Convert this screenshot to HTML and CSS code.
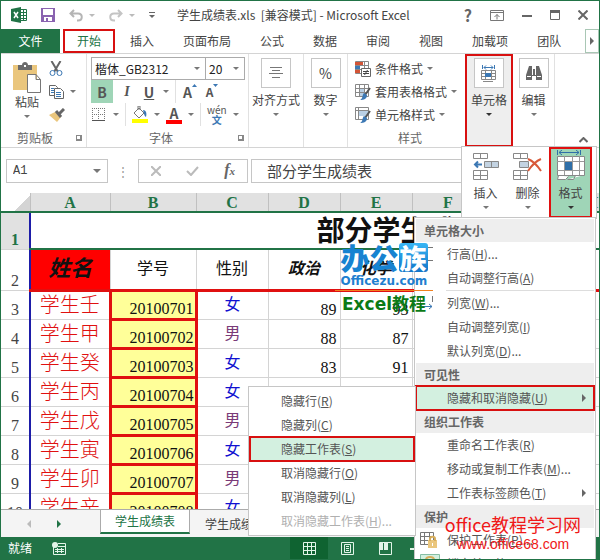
FILE: index.html
```html
<!DOCTYPE html>
<html lang="zh-CN">
<head>
  <meta charset="UTF-8">
  <meta name="viewport" content="width=device-width, initial-scale=1.0">
  <title>学生成绩表.xls</title>
  <link rel="stylesheet" href="styles.css">
</head>
<body>

<div class="window">
  <header class="titlebar">
    <div class="quick">
      <svg width="16" height="16" viewBox="0 0 16 16"><path fill="#fff" stroke="#217346" d="M8 2.500h7.500v11H8"/><path stroke="#217346" d="M8 5.500h7M8 8.500h7M8 11.500h7M12.500 3v10"/><path fill="#217346" d="M0 2l10-2v16L0 14z"/><path stroke="#fff" stroke-width="1.500" d="M3 5l4 6M7 5l-4 6"/></svg>
      <svg width="14" height="14" viewBox="0 0 14 14"><path fill="#8a63b0" d="M0 0h14v14H0z"/><path fill="#fff" d="M2 1h10v6H2zM3 9h8v4H7v-3H5v3H3z"/></svg>
      <span class="undo">
        <svg width="14" height="13" viewBox="0 0 14 13"><path fill="none" stroke="#b5b5b5" stroke-width="2" d="M5 1L1.500 4.500 5 8M2 4.500h7c5 0 5 7 0 7H8"/></svg>
        <i class="caret light"></i>
      </span>
      <span class="undo">
        <svg width="14" height="13" viewBox="0 0 14 13"><path fill="none" stroke="#c4c4c4" stroke-width="2" d="M9 1l3.500 3.500L9 8M12 4.500H5c-5 0-5 7 0 7h1"/></svg>
        <i class="caret light"></i>
      </span>
      <svg width="6" height="6" viewBox="0 0 6 6"><path stroke="#666" d="M0 .500h6"/><path fill="#666" d="M0 3h6L3 6z"/></svg>
    </div>
    <h1>学生成绩表.xls&nbsp; [兼容模式] - Microsoft Excel</h1>
    <div class="winbtns">
      <button aria-label="帮助">?</button>
      <button aria-label="功能区显示选项"><svg width="14" height="11" viewBox="0 0 14 11"><path fill="none" stroke="#777" d="M.500.500h13v10H.500zM0 2.500h14M7 9.500v-5M4.500 7L7 4.500 9.500 7"/></svg></button>
      <button aria-label="最小化"><svg width="10" height="10" viewBox="0 0 10 10"><path fill="#666" d="M0 5h10v2H0z"/></svg></button>
      <button aria-label="最大化"><svg width="10" height="10" viewBox="0 0 10 10"><path fill="none" stroke="#666" d="M.500.500h9v9h-9z"/><path fill="#666" d="M0 0h10v3H0z"/></svg></button>
      <button aria-label="关闭"><svg width="10" height="10" viewBox="0 0 10 10"><path stroke="#666" stroke-width="2" d="M.500.500l9 9M9.500.500l-9 9"/></svg></button>
    </div>
  </header>

  <nav class="tabs">
    <button class="file">文件</button>
    <button class="active">开始</button>
    <button>插入</button>
    <button>页面布局</button>
    <button>公式</button>
    <button>数据</button>
    <button>审阅</button>
    <button>视图</button>
    <button>加载项</button>
    <button>团队</button>
    <button class="more" aria-label="更多"><i class="arrow-r"></i></button>
  </nav>

  <section class="ribbon">
    <div class="group clipboard">
      <div class="group-body">
        <button class="big">
          <svg width="28" height="32" viewBox="0 0 28 32"><path fill="#eac67d" d="M0 3h24v25H0z"/><path fill="#6b6b6b" d="M5 3h4c0-4 6-4 6 0h4v5H5z"/><path fill="#fff" d="M11 3h2v2h-2z"/><path fill="#fff" stroke="#777" d="M14.500 12.500H23l4.500 5v13h-13zM23 12.500v5h4.500"/></svg>
          <span>粘贴</span>
          <i class="caret"></i>
        </button>
        <div class="smalls">
          <button aria-label="剪切"><svg width="14" height="16" viewBox="0 0 14 16"><path stroke="#666" stroke-width="2" d="M2.500 0L9 11M11.500 0L5 11"/><circle cx="3.500" cy="12" r="2.500" fill="#fff" stroke="#3c78b4"/><circle cx="10.500" cy="12" r="2.500" fill="#fff" stroke="#3c78b4"/></svg></button>
          <button aria-label="复制"><svg width="15" height="14" viewBox="0 0 15 14"><path fill="#fff" stroke="#666" d="M.500.500h6l2 2v8h-8z"/><path stroke="#3c78b4" d="M2 3.500h3M2 5.500h3M2 7.500h3"/><path fill="#fff" stroke="#666" d="M5.500 3.500h6l3 3v7h-9z"/><path stroke="#3c78b4" d="M7 7.500h5M7 9.500h5M7 11.500h5"/></svg><i class="caret"></i></button>
          <button aria-label="格式刷"><svg width="16" height="14" viewBox="0 0 16 14"><path fill="#eac67d" d="M0 7l6-3 6 5-4 5z"/><path stroke="#666" stroke-width="3" d="M7 3l5 6M10 6l5-5"/></svg></button>
        </div>
      </div>
      <div class="group-label">剪贴板<i class="launcher"></i></div>
    </div>

    <div class="group font">
      <div class="combos">
        <label class="combo name"><select aria-label="字体"><option>楷体_GB2312</option></select><i class="caret"></i></label>
        <label class="combo size"><select aria-label="字号"><option>20</option></select><i class="caret"></i></label>
      </div>
      <div class="tools">
        <button class="on"><b>B</b></button>
        <button class="ital">I</button>
        <button class="under">U</button>
        <i class="caret"></i>
        <span class="vline"></span>
        <button class="grow">A<svg width="5" height="3" viewBox="0 0 5 3"><path fill="#3c78b4" d="M0 3h5L2.500 0z"/></svg></button>
        <button class="shrink">A<svg width="5" height="3" viewBox="0 0 5 3"><path fill="#3c78b4" d="M0 0h5L2.500 3z"/></svg></button>
      </div>
      <div class="tools">
        <button aria-label="边框"><svg width="14" height="14" viewBox="0 0 14 14"><path fill="none" stroke="#777" stroke-dasharray="1 1" d="M.500 0v13M6.500 0v13M12.500 0v13M0 .500h13M0 6.500h13"/><path stroke="#555" d="M0 12.500h13"/></svg></button>
        <i class="caret"></i>
        <span class="vline"></span>
        <button aria-label="填充颜色"><svg width="16" height="17" viewBox="0 0 16 17"><path fill="#fff" stroke="#777" d="M2 7l5-5 5 5-5 5zM6 4V0h2v4"/><path fill="#3c78b4" d="M11 4c3 0 4 3 3 7-2-1-2-4-3-7z"/><path fill="#ff0" d="M0 13h16v4H0z"/></svg></button>
        <i class="caret"></i>
        <button class="color">A</button>
        <i class="caret"></i>
        <span class="vline"></span>
        <button class="pinyin"><span>wén</span><b>文</b></button>
        <i class="caret"></i>
      </div>
      <div class="group-label">字体<i class="launcher"></i></div>
    </div>

    <div class="group drop align">
      <button class="big"><span class="tile"><svg width="14" height="12" viewBox="0 0 14 12"><path stroke="#777" d="M1 .500h12M3 3.500h8M0 6.500h14M3 10.500h8"/></svg></span><span>对齐方式</span><i class="caret"></i></button>
    </div>

    <div class="group drop number">
      <button class="big"><span class="tile">%</span><span>数字</span><i class="caret"></i></button>
    </div>

    <div class="group styles">
      <button><svg width="16" height="16" viewBox="0 0 16 16"><path fill="#fff" stroke="#888" d="M.500.500h13v12H.500zM0 4.500h13M0 8.500h13M9.500 0v12"/><path fill="#d35436" d="M0 1h8v3H0zM0 9h5v3H0z"/><path fill="#3c78b4" d="M0 5h5v3H0z"/><path fill="#fff" stroke="#666" d="M6.500 7.500h9v8h-9z"/><path stroke="#444" d="M8 10.500h6M8 12.500h6M12.500 9l-3 5"/></svg>条件格式<i class="caret"></i></button>
      <button><svg width="16" height="16" viewBox="0 0 16 16"><path fill="#fff" stroke="#888" d="M.500.500h13v12H.500zM0 4.500h13M0 8.500h13M4.500 0v12M9.500 0v12"/><path fill="#b9cfe4" d="M5 5h4v3H5zM5 9h4v3H5z"/><path stroke="#555" stroke-width="2" d="M15 4l-5 7"/><path fill="#3c78b4" d="M9 9l3 2c0 4-3 5-7 5 3-1 2-5 4-7z"/></svg>套用表格格式<i class="caret"></i></button>
      <button><svg width="16" height="16" viewBox="0 0 16 16"><path fill="#fff" stroke="#888" d="M.500.500h13v12H.500zM0 3.500h13M3.500 0v12"/><path fill="#b9cfe4" d="M4 4h9v5H4z"/><path stroke="#555" stroke-width="2" d="M15 4l-5 7"/><path fill="#3c78b4" d="M9 9l3 2c0 4-3 5-7 5 3-1 2-5 4-7z"/></svg>单元格样式<i class="caret"></i></button>
      <div class="group-label">样式</div>
    </div>

    <div class="group drop cells">
      <button class="big"><span class="tile"><svg width="16" height="17" viewBox="0 0 16 17"><path fill="none" stroke="#3c78b4" d="M1.500 0v4M13.500 0v4M3 2.500h9M5 .500L3 2.500l2 2M10 .500l2 2-2 2"/><path fill="#fff" stroke="#888" d="M.500 5.500h14v9H.500zM0 8.500h14M0 11.500h14M4.500 5v9M10.500 5v9M2 16.500h10"/><path fill="#3c78b4" d="M4 8h6v4H4z"/></svg></span><span>单元格</span><i class="caret dark"></i></button>
    </div>

    <div class="group drop edit">
      <button class="big"><span class="tile"><svg width="16" height="14" viewBox="0 0 16 14"><path fill="#666" d="M3 0h3v3h4V0h3l3 9v5h-6v-4H6v4H0V9z"/><path stroke="#fff" d="M6.500 3v6M9.500 3v6M1 10.500h4M11 10.500h4"/></svg></span><span>编辑</span><i class="caret"></i></button>
    </div>
    <button class="collapse" aria-label="折叠功能区"><svg width="9" height="6" viewBox="0 0 9 6"><path fill="none" stroke="#666" stroke-width="2" d="M.500 5l4-4 4 4"/></svg></button>
  </section>

  <section class="formula">
    <label class="namebox"><input type="text" value="A1" aria-label="名称框"><i class="caret"></i></label>
    <span class="dots">⋮</span>
    <div class="fx">
      <button aria-label="取消"><svg width="10" height="10" viewBox="0 0 10 10"><path stroke="#bbb" stroke-width="2" d="M0 0l10 10M10 0L0 10"/></svg></button>
      <button aria-label="输入"><svg width="13" height="10" viewBox="0 0 13 10"><path fill="none" stroke="#bbb" stroke-width="2" d="M1 5l4 4 7-8"/></svg></button>
      <button class="fn">f<small>x</small></button>
    </div>
    <input class="content" type="text" value="部分学生成绩表" aria-label="编辑栏">
  </section>

  <main class="grid">
    <table>
      <colgroup><col class="c-row"><col class="c-a"><col class="c-b"><col class="c"><col class="c"><col class="c"><col class="c"><col class="c"><col class="c"><col class="c"><col class="c-last"></colgroup>
      <thead>
        <tr><th class="corner"></th><th>A</th><th>B</th><th>C</th><th>D</th><th>E</th><th>F</th><th>G</th><th>H</th><th>I</th><th>J</th></tr>
      </thead>
      <tbody>
        <tr class="r1"><th>1</th><td colspan="10">部分学生成绩表</td></tr>
        <tr class="r2"><th>2</th><td class="xm">姓名</td><td>学号</td><td>性别</td><td class="it">政治</td><td class="it">化学</td><td></td><td></td><td></td><td></td><td></td></tr>
        <tr><th>3</th><td class="stu">学生壬</td><td class="id">20100701</td><td class="f">女</td><td>89</td><td>93</td><td></td><td></td><td></td><td></td><td></td></tr>
        <tr><th>4</th><td class="stu">学生甲</td><td class="id">20100702</td><td class="m">男</td><td>88</td><td>87</td><td></td><td></td><td></td><td></td><td></td></tr>
        <tr><th>5</th><td class="stu">学生癸</td><td class="id">20100703</td><td class="f">女</td><td>83</td><td>91</td><td></td><td></td><td></td><td></td><td></td></tr>
        <tr><th>6</th><td class="stu">学生丙</td><td class="id">20100704</td><td class="f">女</td><td></td><td></td><td></td><td></td><td></td><td></td><td></td></tr>
        <tr><th>7</th><td class="stu">学生戊</td><td class="id">20100705</td><td class="m">男</td><td></td><td></td><td></td><td></td><td></td><td></td><td></td></tr>
        <tr><th>8</th><td class="stu">学生寅</td><td class="id">20100706</td><td class="f">女</td><td></td><td></td><td></td><td></td><td></td><td></td><td></td></tr>
        <tr><th>9</th><td class="stu">学生卯</td><td class="id">20100707</td><td class="m">男</td><td></td><td></td><td></td><td></td><td></td><td></td><td></td></tr>
        <tr><th>10</th><td class="stu">学生辛</td><td class="id">20100708</td><td class="f">女</td><td></td><td></td><td></td><td></td><td></td><td></td><td></td></tr>
      </tbody>
    </table>
  </main>

  <nav class="sheets">
    <button class="nav" aria-label="上一个"><i class="arrow-l"></i></button>
    <button class="nav" aria-label="下一个"><i class="arrow-r"></i></button>
    <button class="sheet active">学生成绩表</button>
    <button class="sheet">学生成绩表</button>
  </nav>

  <footer class="status">
    <span>就绪</span>
    <svg width="14" height="13" viewBox="0 0 14 13"><path fill="none" stroke="#e2f5e8" d="M1.500 4v8.500h12v-11H6M6 4.500h7M3 7.500h9M3 9.500h9M5.500 6v5M9.500 6v5"/><circle cx="3" cy="3" r="3" fill="#e2f5e8"/></svg>
    <div class="views">
      <button class="on" aria-label="普通"><svg width="13" height="13" viewBox="0 0 13 13"><path fill="none" stroke="#e2f5e8" d="M.500.500h12v12H.500zM0 4.500h13M0 8.500h13M4.500 0v13M8.500 0v13"/></svg></button>
      <button aria-label="页面布局"><svg width="13" height="13" viewBox="0 0 13 13"><path fill="none" stroke="#e2f5e8" d="M.500.500h12v12H.500zM3.500 2.500h6v8h-6zM5 4.500h3M5 6.500h3M5 8.500h3"/></svg></button>
      <button aria-label="分页预览"><svg width="13" height="13" viewBox="0 0 13 13"><path fill="none" stroke="#e2f5e8" d="M.500.500h12v12H.500z"/><path fill="#e2f5e8" d="M1 1h3v7H1zM5 1h4v7H5z"/></svg></button>
      <button class="minus" aria-label="缩小"><svg width="9" height="13" viewBox="0 0 9 13"><path fill="#e2f5e8" d="M0 6h9v2H0z"/></svg></button>
    </div>
  </footer>

  <div class="cells-popup">
    <button>
      <svg width="26" height="28" viewBox="0 0 26 28"><path fill="#fff" stroke="#888" d="M.500.500h14v5H.500zM7.500 0v6M.500 17.500h14v9H.500zM0 22.500h14M7.500 17v9"/><path fill="#c3d3e2" stroke="#888" d="M11.500 8.500h14v6h-14zM18.500 8v6"/><path fill="none" stroke="#3c78b4" stroke-width="2" d="M9 11.500H2M5 8.500l-3 3 3 3"/></svg>
      <span>插入</span><i class="caret"></i>
    </button>
    <button>
      <svg width="29" height="28" viewBox="0 0 29 28"><path fill="#fff" stroke="#888" d="M.500.500h14v5H.500zM7.500 0v6M.500 17.500h14v9H.500zM0 22.500h14M7.500 17v9"/><path fill="#c3d3e2" stroke="#888" d="M6.500 8.500h9v6h-9z"/><path fill="none" stroke="#d85a3a" stroke-width="2" d="M15 6c5 2 9 6 13 12M28 6c-5 2-9 6-13 12"/></svg>
      <span>删除</span><i class="caret"></i>
    </button>
    <button class="hot">
      <svg width="28" height="31" viewBox="0 0 28 31"><path fill="none" stroke="#2f6fa8" d="M.500 0v5M23.500 0v5M2 2.500h20M5 0L2 2.500 5 5M19 0l3 2.500L19 5"/><path fill="#fff" stroke="#888" d="M1.500 25.500l-1 4h8l3-3M10.500 29.500h6l2-4h7"/><path fill="#fff" stroke="#888" d="M.500 6.500h27v19H.500z"/><path fill="none" stroke="#999" d="M0 11.500h27M0 20.500h27M7.500 6v19M15.500 6v19M22.500 6v19"/><path fill="#2f6fa8" d="M8 12h7v8H8z"/></svg>
      <span>格式</span><i class="caret dark"></i>
    </button>
  </div>

  <div class="menu">
    <h2>单元格大小</h2>
    <button><svg width="13" height="14" viewBox="0 0 13 14"><path fill="none" stroke="#777" d="M5 .500h8M5 13.500h8M5.500 0v14"/></svg><span>行高(<u>H</u>)...</span></button>
    <button><span>自动调整行高(<u>A</u>)</span></button>
    <hr>
    <button><svg width="13" height="14" viewBox="0 0 13 14"><path fill="none" stroke="#777" d="M.500 0v12M12.500 0v6"/><path fill="none" stroke="#3c78b4" d="M2 10.500h10M9 8l3 2.500L9 13"/></svg><span>列宽(<u>W</u>)...</span></button>
    <button><span>自动调整列宽(<u>I</u>)</span></button>
    <button><span>默认列宽(<u>D</u>)...</span></button>
    <h2>可见性</h2>
    <div class="has-sub">
      <button class="hot"><span>隐藏和取消隐藏(<u>U</u>)</span><i class="arrow-r"></i></button>
      <div class="submenu">
        <button>隐藏行(<u>R</u>)</button>
        <button>隐藏列(<u>C</u>)</button>
        <button class="hot">隐藏工作表(<u>S</u>)</button>
        <button>取消隐藏行(<u>O</u>)</button>
        <button>取消隐藏列(<u>L</u>)</button>
        <button disabled>取消隐藏工作表(<u>H</u>)...</button>
      </div>
    </div>
    <h2>组织工作表</h2>
    <button><span>重命名工作表(<u>R</u>)</span></button>
    <button><span>移动或复制工作表(<u>M</u>)...</span></button>
    <button><span>工作表标签颜色(<u>T</u>)</span><i class="arrow-r"></i></button>
    <h2>保护</h2>
    <button><svg width="17" height="16" viewBox="0 0 17 16"><path fill="#fff" stroke="#777" d="M.500.500h13v12H.500zM0 4.500h13M0 8.500h13M4.500 0v12M9.500 0v12"/><path fill="#eac67d" d="M8 8h9v8H8z"/><path fill="none" stroke="#d6ad5b" stroke-width="2" d="M10 9V7c0-3 5-3 5 0v2"/><path fill="#fff" d="M12 11h1v3h-1z"/></svg><span>保护工作表(<u>P</u>)...</span></button>
    <button><svg width="20" height="20" viewBox="0 0 20 20"><path fill="#d3f0e0" stroke="#86bfa4" d="M.500.500h19v19H.500z"/><path fill="none" stroke="#d6ad5b" stroke-width="2" d="M6 10V6c0-4 8-4 8 0v4"/><path fill="#eac67d" d="M4 9h12v9H4z"/></svg><span>锁定单元格(<u>L</u>)</span></button>
  </div>

  <div class="logo">
    <div class="logo-name">办公<span>族</span></div>
    <div class="logo-url">Officezu.com</div>
    <div class="logo-sub">Excel教程</div>
  </div>
  <div class="site">
    <div>office教程学习网</div>
    <a href="#">www.office68.com</a>
  </div>
</div>

</body>
</html>
```

FILE: styles.css
```css
* {
  box-sizing: border-box;
}
body {
  margin: 0;
  font-family: "Noto Sans CJK SC", sans-serif;
  font-size: 12px;
  line-height: 16px;
  color: #444;
  overflow: hidden;
}
button {
  border: 0;
  padding: 0;
  margin: 0;
  background: none;
  font: inherit;
  color: inherit;
}
input, select {
  border: 0;
  padding: 0;
  margin: 0;
  outline: 0;
  background: none;
  font: inherit;
  color: inherit;
  min-width: 0;
}
svg {
  display: block;
  flex: none;
}
.window {
  position: relative;
  display: flex;
  flex-direction: column;
  height: 100vh;
  overflow: hidden;
  background: #fff;
  border: 1px solid #217346;
}

/* small arrows */
.caret {
  flex: none;
  border: 3px solid transparent;
  border-top-color: #777;
  border-bottom: 0;
}
.caret.light {
  border-top-color: #bbb;
}
.caret.dark {
  border-top-color: #333;
}
.arrow-r, .arrow-l {
  flex: none;
  border: 4px solid transparent;
  border-left-color: #666;
  border-right: 0;
}
.arrow-l {
  border-left: 0;
  border-right: 4px solid #bbb;
}

/* title bar */
.titlebar {
  display: flex;
  align-items: center;
  height: 28px;
  padding: 0 11px 0 10px;
}
.quick {
  display: flex;
  align-items: center;
  gap: 14px;
  width: 166px;
}
.undo {
  display: flex;
  align-items: center;
  gap: 6px;
}
h1 {
  flex: 1;
  margin: 0;
  font-size: 12px;
  font-weight: normal;
  white-space: nowrap;
}
.winbtns {
  display: flex;
  align-items: center;
  gap: 18px;
  color: #666;
}
.winbtns button:first-child {
  font-size: 16px;
  font-weight: bold;
}

/* tabs */
.tabs {
  display: flex;
  gap: 1px;
  height: 25px;
  border-bottom: 1px solid #d4d4d4;
}
.tabs button {
  padding: 0 14px;
  white-space: nowrap;
}
.tabs .file {
  width: 59px;
  margin-right: 2px;
  background: #217346;
  color: #fff;
}
.tabs .active {
  color: #217346;
  outline: 2px solid #d81010;
  outline-offset: -2px;
}
.tabs .more {
  display: flex;
  align-items: center;
  margin-left: auto;
  padding: 0 4px;
  border: 1px solid #a9c7b5;
}

/* ribbon */
.ribbon {
  display: flex;
  height: 94px;
  border-bottom: 1px solid #d4d4d4;
}
.group {
  display: flex;
  flex-direction: column;
  flex: none;
  padding: 3px 0 1px;
  border-right: 1px solid #e1e1e1;
}
.group-label {
  display: flex;
  justify-content: center;
  align-items: center;
  margin-top: auto;
  color: #666;
}
.launcher {
  width: 6px;
  height: 6px;
  border: solid #888;
  border-width: 1px 2px 2px 1px;
}
.big {
  display: flex;
  flex-direction: column;
  align-items: center;
  white-space: nowrap;
}
.big .caret {
  margin-top: 5px;
}
.clipboard {
  width: 86px;
}
.clipboard .big {
  padding-top: 5px;
}
.clipboard .group-label, .font .group-label {
  padding: 0 4px 0 16px;
}
.clipboard .launcher, .font .launcher {
  margin-left: auto;
}
.font .group-label {
  padding-left: 58px;
}
.group-body {
  display: flex;
  gap: 8px;
  padding-left: 12px;
}
.smalls button {
  display: flex;
  align-items: center;
  gap: 6px;
  height: 23px;
}
.font {
  width: 162px;
  padding-left: 4px;
}
.combos, .tools {
  display: flex;
  align-items: center;
  height: 23px;
}
.combo {
  display: flex;
  align-items: center;
  height: 23px;
  padding: 0 5px 0 3px;
  border: 1px solid #ababab;
  color: #222;
}
.combo select {
  flex: 1;
  appearance: none;
}
.combo.name {
  width: 115px;
}
.combo.size {
  width: 40px;
  margin-left: -1px;
}
.tools {
  gap: 6px;
  padding-right: 4px;
}
.tools button {
  display: flex;
  justify-content: center;
  align-items: center;
  min-width: 16px;
  height: 23px;
  font-size: 14px;
  color: #555;
}
.tools .on {
  width: 22px;
  background: #9fd5b7;
}
.tools .ital {
  font-family: "Liberation Serif", serif;
  font-style: italic;
  font-weight: bold;
}
.tools .under {
  font-weight: bold;
  text-decoration: underline;
}
.tools .grow, .tools .shrink {
  align-items: flex-start;
  padding-top: 4px;
  font-weight: bold;
}
.tools .shrink {
  font-size: 12px;
}
.tools .color {
  height: 19px;
  border-bottom: 4px solid #f00;
  font-weight: bold;
}
.tools .pinyin {
  flex-direction: column;
  font-size: 10px;
  line-height: 10px;
}
.pinyin b {
  color: #3c78b4;
}
.vline {
  align-self: stretch;
  border-left: 1px solid #e1e1e1;
}
.drop {
  align-items: center;
}
.tile {
  display: flex;
  justify-content: center;
  align-items: center;
  width: 30px;
  height: 30px;
  margin: 1px 0 4px;
  border: 1px solid #c6c6c6;
  background: #fff;
  font-size: 14px;
}
.align {
  width: 55px;
}
.number {
  width: 44px;
}
.styles {
  width: 117px;
  padding-left: 7px;
  border-right: 0;
}
.styles button {
  display: flex;
  align-items: center;
  gap: 4px;
  height: 23px;
  white-space: nowrap;
}
.cells {
  width: 48px;
  background: #eee;
  outline: 2px solid #d81010;
  outline-offset: -2px;
  border-right: 0;
}
.edit {
  width: 42px;
}
.collapse {
  align-self: flex-end;
  margin: 0 11px 4px auto;
}

/* formula bar */
.formula {
  display: flex;
  align-items: center;
  height: 45px;
  padding: 0 4px 0 5px;
}
.namebox, .fx, .content {
  display: flex;
  align-items: center;
  height: 24px;
  border: 1px solid #c6c6c6;
}
.namebox {
  width: 102px;
  padding: 0 6px;
}
.namebox input {
  flex: 1;
  font-family: "Liberation Mono", monospace;
}
.namebox .caret {
  border-width: 4px 4px 0;
}
.dots {
  width: 30px;
  text-align: center;
  color: #999;
}
.fx {
  justify-content: space-between;
  width: 110px;
  padding: 0 12px;
}
.fn {
  font-family: "Liberation Serif", serif;
  font-size: 16px;
  font-style: italic;
  font-weight: bold;
  color: #666;
}
.fn small {
  font-size: 11px;
}
.content {
  flex: 1;
  margin-left: 3px;
  padding-left: 15px;
  font-size: 15px;
}

/* grid */
.grid {
  flex: 1;
  min-height: 0;
  overflow: hidden;
}
table {
  table-layout: fixed;
  width: 798px;
  border-collapse: collapse;
  font-family: "Liberation Serif", "Noto Sans CJK SC", serif;
  font-size: 16px;
  line-height: 18px;
  color: #111;
}
.c-row {
  width: 29px;
}
.c-a {
  width: 80px;
}
.c-b {
  width: 86px;
}
.c {
  width: 72px;
}
.c-last {
  width: 99px;
}
th, td {
  height: 29px;
  padding: 0 3px;
  border: 1px solid #d4d4d4;
  text-align: right;
  vertical-align: bottom;
  white-space: nowrap;
}
th {
  border-left: 0;
  text-align: center;
  font-weight: normal;
  color: #444;
}
thead th {
  height: 19px;
  background: #e1e1e1;
  border-color: #c0c0c0;
  border-top: 0;
  border-bottom: 2px solid #217346;
  font-weight: bold;
  line-height: 16px;
  color: #217346;
}
thead .corner {
  background: linear-gradient(135deg, #fff 68%, #d4d4d4 68%);
}
.r1 th {
  background: #e1e1e1;
  font-weight: bold;
  color: #217346;
}
.r1 th, .r1 td {
  height: 37px;
}
.r1 td {
  border: 2px solid #217346;
  padding-top: 2px;
  text-align: center;
  vertical-align: middle;
  font-size: 28px;
  font-weight: bold;
  line-height: 32px;
}
.r2 th, .r2 td {
  height: 41px;
}
.r2 td {
  text-align: center;
  vertical-align: middle;
  border-bottom: 3px solid #e01010;
}
.r2 .xm {
  background: #f00;
  font-size: 22px;
  font-style: italic;
  font-weight: bold;
}
.r2 .it {
  font-style: italic;
  font-weight: bold;
}
td:nth-child(2) {
  border-left: 2px solid #1d1da8;
}
td.stu {
  text-align: center;
  vertical-align: middle;
  font-size: 20px;
  font-weight: 300;
  line-height: 24px;
  color: #e01010;
}
td.id {
  padding-right: 1px;
  background: #ff9;
  border: 3px solid #e01010;
}
td.f, td.m {
  text-align: center;
  vertical-align: middle;
  color: #1010d0;
}
td.m {
  color: #7a3a78;
}

/* sheet tabs */
.sheets {
  display: flex;
  height: 28px;
  border-top: 1px solid #ababab;
  background: #f4f4f4;
}
.nav {
  display: flex;
  align-items: center;
  padding-left: 26px;
}
.nav .arrow-r {
  border-left-color: #217346;
}
.sheet {
  width: 90px;
}
.sheet.active {
  margin-left: 39px;
  background: #fff;
  border: 1px solid #ababab;
  border-top: 0;
  border-bottom: 2px solid #217346;
  margin-bottom: 3px;
  color: #217346;
}

/* status bar */
.status {
  display: flex;
  align-items: center;
  gap: 20px;
  height: 22px;
  padding-left: 7px;
  background: #217346;
  color: #fff;
}
.views {
  display: flex;
  align-self: stretch;
  margin-left: 204px;
}
.views button {
  display: flex;
  align-items: center;
  justify-content: center;
  width: 38px;
}
.views .minus {
  width: 20px;
}
.views .on {
  background: #0f6331;
}

/* drop-down with the cell commands */
.cells-popup {
  position: absolute;
  top: 145px;
  right: 2px;
  display: flex;
  gap: 1px;
  padding: 0 4px 0 3px;
  background: #fff;
  border: 1px solid #c6c6c6;
}
.cells-popup button {
  display: flex;
  flex-direction: column;
  align-items: center;
  justify-content: flex-end;
  width: 41px;
  height: 71px;
  padding-bottom: 9px;
}
.cells-popup span {
  margin: 4px 0 5px;
}
.cells-popup .hot {
  width: 43px;
  background: #9fd5b7;
  border: 2px solid #e01010;
  padding-bottom: 7px;
}

/* menus */
.menu {
  position: absolute;
  top: 216px;
  right: 3px;
  width: 182px;
  padding: 1px;
  background: #fff;
  border: 1px solid #c6c6c6;
  color: #555;
}
.menu h2 {
  margin: 0;
  padding: 0 8px;
  background: #eee;
  font-size: 12px;
  line-height: 23px;
  color: #666;
}
.menu button {
  display: grid;
  grid-template-columns: 27px 1fr auto;
  align-items: center;
  width: 100%;
  height: 24px;
  padding: 0 8px 0 4px;
  text-align: left;
  white-space: nowrap;
}
.menu button > span {
  grid-column: 2;
}
.menu hr {
  margin: 0 0 0 30px;
  border: 0;
  border-top: 1px solid #ddd;
}
.menu .hot {
  background: #d3f0e0;
  outline: 2px solid #d81010;
  outline-offset: -1px;
}
.has-sub {
  position: relative;
}
.submenu {
  position: absolute;
  top: 0;
  right: 100%;
  width: 168px;
  padding: 2px 1px;
  background: #fff;
  border: 1px solid #c6c6c6;
}
.menu .submenu button {
  display: block;
  padding-left: 31px;
}
.submenu button:disabled {
  color: #b0b0b0;
}

/* watermarks over the sheet */
.logo {
  position: absolute;
  top: 242px;
  left: 334px;
  width: 98px;
  text-align: center;
  font-weight: bold;
}
.logo-name {
  display: flex;
  justify-content: center;
  align-items: center;
  font-size: 29px;
  line-height: 29px;
  font-weight: 900;
  color: #1783d1;
}
.logo-name span {
  padding: 0 1px;
  border-radius: 3px;
  background: linear-gradient(#38b6f5, #1275c8);
  font-size: 27px;
  color: #fff;
}
.logo-url {
  font-family: "DejaVu Sans", sans-serif;
  font-size: 12px;
  line-height: 18px;
  color: #1f7fd0;
  border-bottom: 1px solid #f08020;
}
.logo-sub {
  font-family: "DejaVu Sans", "Noto Sans CJK SC", sans-serif;
  font-size: 17px;
  line-height: 26px;
  white-space: nowrap;
  color: #0b7a16;
}
.site {
  position: absolute;
  right: 18px;
  bottom: 7px;
  text-align: center;
  font-size: 18px;
  line-height: 24px;
  color: #f01818;
}
.site a {
  display: block;
  font-family: "Liberation Sans", sans-serif;
  font-size: 14px;
  line-height: 16px;
  color: inherit;
  text-decoration: none;
}
```
